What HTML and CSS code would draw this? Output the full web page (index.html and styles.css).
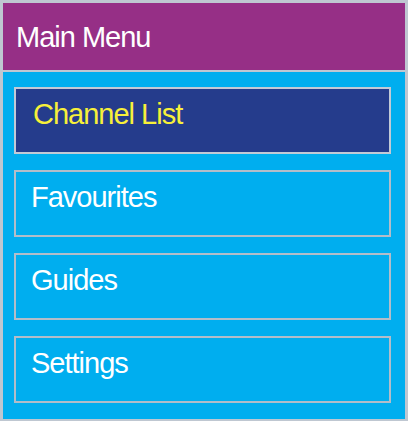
FILE: index.html
```html
<!DOCTYPE html>
<html lang="en">
<head>
    <meta charset="UTF-8">
    <meta name="viewport" content="width=device-width, initial-scale=1.0">
    <title>Main Menu</title>
    <link rel="stylesheet" href="styles.css">
</head>
<body>
    <div class="menu">
        <div class="menu-header">Main Menu</div>
        <ul class="menu-list">
            <li class="menu-item active">Channel List</li>
            <li class="menu-item">Favourites</li>
            <li class="menu-item">Guides</li>
            <li class="menu-item">Settings</li>
        </ul>
    </div>
</body>
</html>
```

FILE: styles.css
```css
:root {
    --frame-color: #bfc7d1;
    --header-color: #962f86;
    --panel-color: #00aeef;
    --active-color: #253c8c;
    --active-text: #f7f03a;
}

* {
    margin: 0;
    padding: 0;
    box-sizing: border-box;
}

body {
    background-color: #ffffff;
    font-family: 'Liberation Sans', Arial, sans-serif;
}

.menu {
    width: 408px;
    border: 3px solid var(--frame-color);
    border-bottom-width: 2px;
    background-color: var(--panel-color);
}

.menu-header {
    height: 69px;
    padding: 18px 0 0 13px;
    background-color: var(--header-color);
    border-bottom: 2px solid var(--frame-color);
    color: #ffffff;
    font-size: 29px;
    line-height: 33px;
    letter-spacing: -1px;
}

.menu-list {
    list-style: none;
    display: flex;
    flex-direction: column;
    gap: 16px;
    padding: 15px 14px 16px 11px;
}

.menu-item {
    height: 67px;
    padding: 9px 0 0 15px;
    border: 2px solid #b3bdc9;
    color: #ffffff;
    font-size: 29px;
    line-height: 33px;
    letter-spacing: -1px;
}

.menu-item.active {
    background-color: var(--active-color);
    border-color: #c3cad6;
    color: var(--active-text);
    padding-left: 17px;
}
```
